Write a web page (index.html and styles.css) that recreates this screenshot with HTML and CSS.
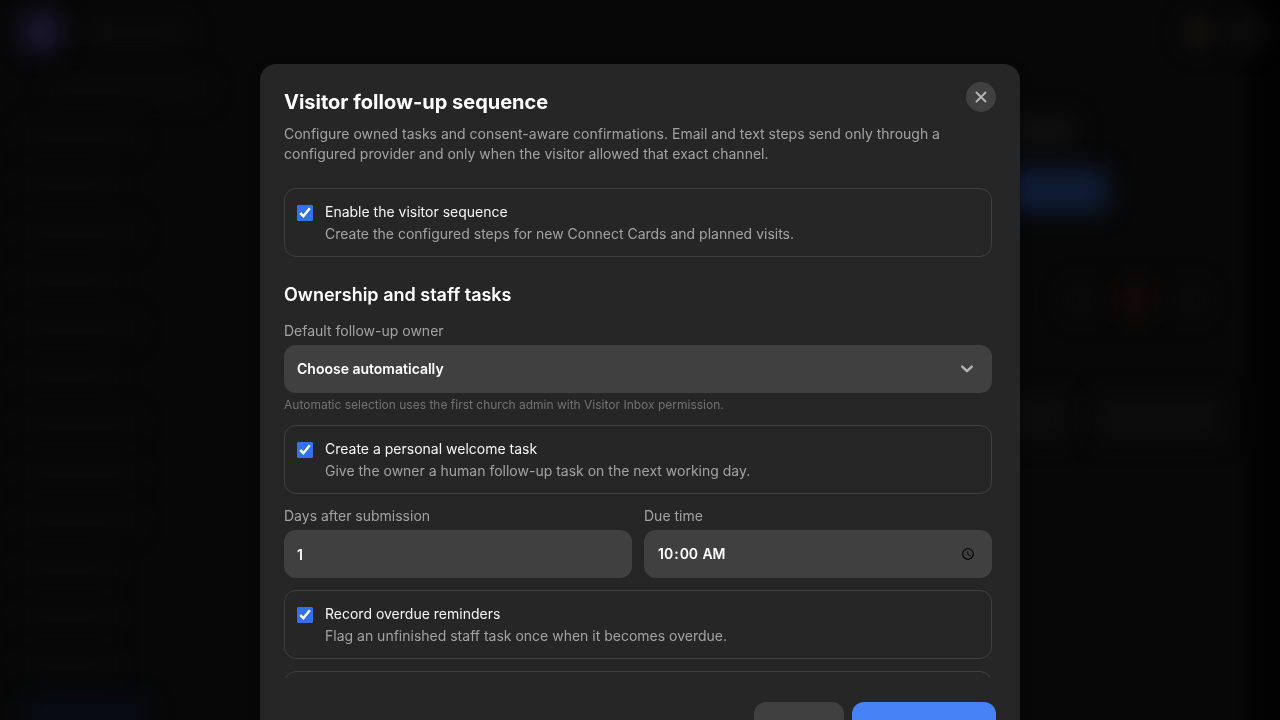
FILE: index.html
```html
<!DOCTYPE html>
<html lang="en">
<head>
<meta charset="utf-8">
<title>Visitor follow-up sequence</title>
<meta name="viewport" content="width=device-width, initial-scale=1">
<link rel="stylesheet" href="styles.css">
</head>
<body>
<div class="page" aria-hidden="true">
  <div class="topbar">
    <span class="shape logo"></span>
    <span class="shape brand"></span>
    <span class="spacer"></span>
    <span class="shape bell"></span>
    <span class="shape avatar"></span>
  </div>
  <div class="columns">
    <div class="sidebar">
      <span class="shape nav nav-head"></span>
      <span class="shape nav long"></span>
      <span class="shape nav"></span>
      <span class="shape nav long"></span>
      <span class="shape nav"></span>
      <span class="shape nav long"></span>
      <span class="shape nav"></span>
      <span class="shape nav long"></span>
      <span class="shape nav long"></span>
      <span class="shape nav long"></span>
      <span class="shape nav"></span>
      <span class="shape nav"></span>
      <span class="shape nav"></span>
      <span class="shape nav active"></span>
    </div>
    <div class="content">
      <span class="shape heading"></span>
      <span class="shape action"></span>
      <div class="stats">
        <span class="shape stat"></span>
        <span class="shape stat alert"></span>
        <span class="shape stat"></span>
      </div>
      <div class="filters">
        <span class="shape filter-small"></span>
        <span class="shape filter"></span>
      </div>
    </div>
  </div>
</div>

<div class="overlay">
  <form class="dialog" role="dialog" aria-modal="true" aria-labelledby="dialog-title" aria-describedby="dialog-desc">
    <header class="dialog-header">
      <div class="dialog-heading">
        <h1 id="dialog-title" class="dialog-title">Visitor follow-up sequence</h1>
        <button type="button" class="close" aria-label="Close">
          <svg viewBox="0 0 16 16" width="16" height="16" fill="none" stroke="currentColor" stroke-width="2" stroke-linecap="round"><path d="M3.5 3.5l9 9M12.5 3.5l-9 9"/></svg>
        </button>
      </div>
      <p id="dialog-desc" class="dialog-desc">Configure owned tasks and consent-aware confirmations. Email and text steps send only through a configured provider and only when the visitor allowed that exact channel.</p>
    </header>

    <div class="dialog-body">
      <label class="option">
        <input class="check" type="checkbox" checked>
        <span class="option-text">
          <span class="option-title">Enable the visitor sequence</span>
          <span class="option-desc">Create the configured steps for new Connect Cards and planned visits.</span>
        </span>
      </label>

      <section class="section">
        <h2 class="section-title">Ownership and staff tasks</h2>

        <div class="field">
          <label class="label" for="owner">Default follow-up owner</label>
          <div class="select-wrap">
            <select id="owner" class="control"><option>Choose automatically</option></select>
            <svg class="chevron" viewBox="0 0 16 16" width="16" height="16" fill="none" stroke="currentColor" stroke-width="2.4" stroke-linecap="round" stroke-linejoin="round"><path d="M3.2 5.6l4.8 4.6 4.8-4.6"/></svg>
          </div>
          <p class="help">Automatic selection uses the first church admin with Visitor Inbox permission.</p>
        </div>

        <label class="option">
          <input class="check" type="checkbox" checked>
          <span class="option-text">
            <span class="option-title">Create a personal welcome task</span>
            <span class="option-desc">Give the owner a human follow-up task on the next working day.</span>
          </span>
        </label>

        <div class="field-row">
          <div class="field">
            <label class="label" for="days">Days after submission</label>
            <input id="days" class="control" type="number" value="1">
          </div>
          <div class="field">
            <label class="label" for="due">Due time</label>
            <input id="due" class="control" type="time" value="10:00">
          </div>
        </div>

        <label class="option">
          <input class="check" type="checkbox" checked>
          <span class="option-text">
            <span class="option-title">Record overdue reminders</span>
            <span class="option-desc">Flag an unfinished staff task once when it becomes overdue.</span>
          </span>
        </label>

        <div class="option option-next"></div>
      </section>
    </div>

    <footer class="dialog-footer">
      <button type="button" class="button secondary">Cancel</button>
      <button type="submit" class="button primary">Save sequence</button>
    </footer>
  </form>
</div>
</body>
</html>
```

FILE: styles.css
```css
* {
  box-sizing: border-box;
}

body {
  margin: 0;
  height: 100vh;
  overflow: hidden;
  background: #070707;
  color: #fff;
  font-family: Inter, "Liberation Sans", sans-serif;
  font-size: 14px;
  line-height: 20px;
}

h1, h2, p {
  margin: 0;
}

button, input, select {
  font: inherit;
}

/* Dimmed page behind the dialog */
.page {
  height: 100vh;
  display: flex;
  flex-direction: column;
  overflow: hidden;
  background: linear-gradient(to left, #020202 16px, #070707 48px);
}

.shape {
  display: block;
  flex: none;
  background: #0b0b0b;
  border-radius: 8px;
  filter: blur(12px);
}

.topbar {
  display: flex;
  align-items: center;
  gap: 16px;
  height: 64px;
  padding: 0 16px 0 20px;
}

.logo {
  width: 44px;
  height: 44px;
  border-radius: 50%;
  background: #1c1730;
}

.brand {
  width: 108px;
  height: 24px;
}

.spacer {
  flex: 1;
}

.bell,
.avatar {
  width: 32px;
  height: 32px;
  border-radius: 50%;
  background: #161111;
}

.avatar {
  background: #101010;
}

.columns {
  display: flex;
  flex: 1;
  min-height: 0;
}

.sidebar {
  flex: none;
  display: flex;
  flex-direction: column;
  gap: 24px;
  width: 260px;
  padding: 12px 24px;
}

.nav {
  width: 90px;
  height: 24px;
  background: #0a0a0a;
}

.long {
  width: 112px;
}

.nav-head {
  width: 160px;
  margin-left: 24px;
}

.active {
  width: 124px;
  background: #080d1a;
}

.content {
  flex: 1;
  display: flex;
  flex-direction: column;
  align-items: flex-end;
  padding: 52px 56px 0 0;
}

.heading {
  width: 160px;
  height: 32px;
  margin-right: 148px;
  background: #101010;
}

.action {
  width: 220px;
  height: 44px;
  margin-top: 20px;
  margin-right: 116px;
  background: #101d36;
}

.stats {
  display: flex;
  gap: 20px;
  margin-top: 72px;
  margin-right: 20px;
}

.stat {
  width: 32px;
  height: 32px;
  background: #0b0b0b;
}

.alert {
  background: #180b0a;
}

.filters {
  display: flex;
  gap: 24px;
  margin-top: 80px;
}

.filter,
.filter-small {
  width: 130px;
  height: 44px;
  background: #0d0d0d;
}

.filter-small {
  width: 100px;
}

/* Dialog */
.overlay {
  position: fixed;
  inset: 0;
  overflow: hidden;
  padding: 64px 16px 0;
}

.dialog {
  max-width: 760px;
  margin: 0 auto;
  padding: 24px;
  border-radius: 16px;
  background: #262626;
  box-shadow: 0 4px 12px rgba(0, 0, 0, 0.4);
}

.dialog-header {
  margin-bottom: 24px;
}

.dialog-heading {
  display: flex;
  justify-content: space-between;
  align-items: flex-end;
  margin-top: -6px;
  margin-bottom: 8px;
  height: 34px;
}

.dialog-title {
  font-size: 20px;
  line-height: 28px;
  font-weight: 700;
}

.close {
  align-self: flex-start;
  display: grid;
  place-items: center;
  width: 30px;
  height: 30px;
  padding: 0;
  border: 0;
  border-radius: 50%;
  background: #404040;
  color: #b4b4b4;
}

.dialog-desc {
  color: #a3a3a3;
}

.dialog-body {
  max-height: 68vh;
  padding-right: 4px;
  overflow-y: auto;
  scrollbar-width: none;
}

.option {
  display: flex;
  align-items: flex-start;
  gap: 12px;
  padding: 12px;
  border: 1px solid #404040;
  border-radius: 12px;
}

.option-next {
  height: 69px;
}

.check {
  flex: none;
  width: 16px;
  height: 16px;
  margin: 4px 0 0;
  accent-color: #3470ee;
}

.option-text {
  display: grid;
  gap: 2px;
}

.option-title {
  line-height: 21px;
  color: #f5f5f5;
}

.option-desc {
  color: #a3a3a3;
}

.section {
  display: grid;
  gap: 12px;
  margin-top: 24px;
}

.section-title {
  font-size: 18px;
  line-height: 28px;
  font-weight: 600;
}

.field {
  display: grid;
  gap: 4px;
}

.field-row {
  display: grid;
  grid-template-columns: 1fr 1fr;
  gap: 12px;
}

.label {
  color: #a3a3a3;
}

.control {
  width: 100%;
  height: 48px;
  padding: 0 13px;
  border: 0;
  border-radius: 12px;
  background: #404040;
  color: #fff;
  font-weight: 600;
  appearance: none;
}

.select-wrap {
  position: relative;
}

.chevron {
  position: absolute;
  top: 16px;
  right: 17px;
  color: #b4b4b4;
  pointer-events: none;
}

.help {
  font-size: 12px;
  line-height: 16px;
  color: #737373;
}

.dialog-footer {
  display: flex;
  justify-content: flex-end;
  gap: 8px;
  margin-top: 24px;
}

.button {
  width: 90px;
  height: 56px;
  padding: 0;
  border: 0;
  border-radius: 12px;
  color: #fff;
  font-weight: 600;
}

.secondary {
  background: #404040;
}

.primary {
  width: 144px;
  background: #4682f6;
}
```
